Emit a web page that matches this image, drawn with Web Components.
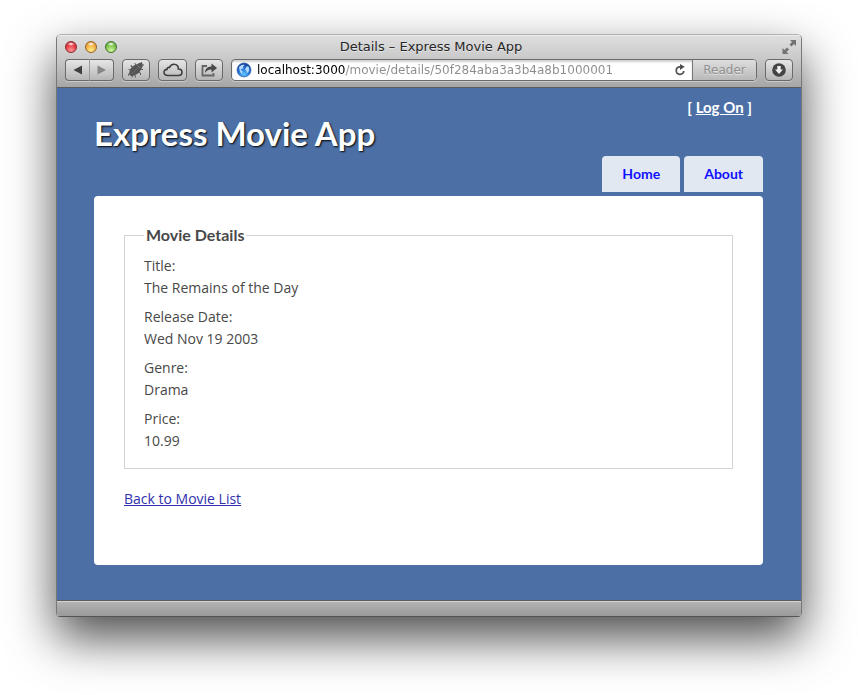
<!DOCTYPE html>
<html lang="en">
<head>
<meta charset="utf-8">
<title>Details – Express Movie App</title>
<style>
  * { box-sizing: border-box; }
  body {
    margin: 0;
    min-height: 100vh;
    padding: 34px 56px 78px;
    display: flex;
    flex-direction: column;
    background: #fff;
    overflow: hidden;
    font-family: "Open Sans", sans-serif;
    font-size: 14px;
    color: #484848;
  }
</style>
</head>
<body>
<browser-window>
  <browser-toolbar slot="chrome" heading="Details – Express Movie App" address="localhost:3000/movie/details/50f284aba3a3b4a8b1000001"></browser-toolbar>
  <movie-page>
    <movie-details legend="Movie Details">
      <detail-row label="Title:">The Remains of the Day</detail-row>
      <detail-row label="Release Date:">Wed Nov 19 2003</detail-row>
      <detail-row label="Genre:">Drama</detail-row>
      <detail-row label="Price:">10.99</detail-row>
    </movie-details>
  </movie-page>
</browser-window>

<template id="t-window">
  <style>
    :host { display: flex; flex-direction: column; flex: 1; border-radius: 5px 5px 4px 4px; border: 1px solid #777; border-top-color: #b2b2b2; border-bottom-color: #555; box-shadow: 0 21px 48px rgba(0,0,0,.7); overflow: hidden; }
    main { flex: 1; display: flex; flex-direction: column; background: #4c70a6; }
    footer { height: 16px; box-sizing: border-box; border-top: 1px solid #5c5c5c; box-shadow: inset 0 1px #d4d4d4; background: linear-gradient(#b5b5b5, #9a9a9a); }
  </style>
  <slot name="chrome"></slot>
  <main><slot></slot></main>
  <footer></footer>
</template>

<template id="t-toolbar">
  <style>
    :host { display: block; background: linear-gradient(#dfdfdf, #c9c9c9 45%, #a6a6a6); border-bottom: 1px solid #5c5c5c; font-family: "DejaVu Sans", sans-serif; box-shadow: inset 0 1px #ececec; }
    .bar { display: grid; grid-template-columns: 1fr auto 1fr; align-items: center; height: 24px; padding: 0 4px 0 8px; }
    .lights { display: flex; gap: 8px; }
    .lights button { width: 12px; height: 12px; border-radius: 50%; padding: 0; border: 1px solid; }
    .lights .red { background: radial-gradient(ellipse 4px 2px at 50% 20%, #fff, transparent), radial-gradient(circle at 50% 85%, #ff9a9a, #e8353c 60%, #b51a24); border-color: #8c2a2e; }
    .lights .amber { background: radial-gradient(ellipse 4px 2px at 50% 20%, #fff, transparent), radial-gradient(circle at 50% 85%, #fff08a, #f2ab3c 60%, #cf7c1c); border-color: #94622a; }
    .lights .green { background: radial-gradient(ellipse 4px 2px at 50% 20%, #fff, transparent), radial-gradient(circle at 50% 85%, #d3f7a0, #74c044 60%, #458c28); border-color: #44742e; }
    h2 { margin: 0; font-size: 13px; font-weight: 400; line-height: 20px; color: #262626; text-shadow: 0 1px rgba(255,255,255,.5); }
    .full { justify-self: end; width: 16px; height: 16px; padding: 0; border: 0; background: none; }
    .tools { display: flex; gap: 8px; padding: 0 8px 6px; }
    .key { box-sizing: border-box; display: flex; align-items: center; justify-content: center; width: 28px; height: 22px; padding: 0; border: 1px solid #6a6a6a; border-radius: 4px; background: linear-gradient(#e6e6e6, #b6b6b6); box-shadow: 0 1px rgba(255,255,255,.35); }
    .cloud { width: 29px; }
    .nav { display: flex; }
    .nav .key { width: 25px; }
    .nav .key:first-child { border-radius: 4px 0 0 4px; border-right-color: #999; }
    .nav .key:last-child { width: 24px; border-radius: 0 4px 4px 0; border-left: 0; }
    .address { box-sizing: border-box; flex: 1; display: flex; align-items: center; height: 22px; border: 1px solid #6a6a6a; border-radius: 4px; background: #fff; overflow: hidden; box-shadow: 0 1px rgba(255,255,255,.35); }
    .field { display: flex; flex: 1; align-items: center; align-self: stretch; gap: 5px; padding-left: 4px; box-shadow: inset 0 2px 2px rgba(0,0,0,.18); }
    input { flex: 1; min-width: 0; height: 20px; padding: 0; border: 0; outline: 0; font: 12px "DejaVu Sans", sans-serif; color: #000; background: linear-gradient(90deg, #000 88px, #8c8c8c 88px) text; -webkit-text-fill-color: transparent; }
    .reload { width: 24px; height: 20px; padding: 0; border: 0; background: none; }
    .reader { align-self: stretch; width: 64px; padding: 0; border: 0; border-left: 1px solid #777; background: linear-gradient(#dedede, #b9b9b9); font: 12px "DejaVu Sans", sans-serif; color: #909090; text-shadow: 0 1px rgba(255,255,255,.5); }
    svg { display: block; margin: auto; }
  </style>
  <div class="bar">
    <div class="lights"><button class="red" aria-label="Close"></button><button class="amber" aria-label="Minimize"></button><button class="green" aria-label="Zoom"></button></div>
    <h2></h2>
    <button class="full" aria-label="Full screen"><svg width="16" height="16" viewBox="0 0 16 16" fill="#727272"><path d="M9 1H15V7L13 5L10.500 7.500L8.500 5.500L11 3ZM7.500 15H1.500V9L3.500 11L6 8.500L8 10.500L5.500 13Z"/></svg></button>
  </div>
  <div class="tools">
    <div class="nav">
      <button class="key" aria-label="Back"><svg width="10" height="10" viewBox="0 0 10 10"><path d="M0.500 5L9 .5V9.500Z" fill="#404040"/></svg></button>
      <button class="key" aria-label="Forward"><svg width="10" height="10" viewBox="0 0 10 10"><path d="M9 5L.5 .5V9.500Z" fill="#858585"/></svg></button>
    </div>
    <button class="key" aria-label="Debug"><svg width="20" height="18" viewBox="0 0 20 18"><g fill="none" stroke="#5a5a5a" stroke-width="1"><path d="M7 6L5 5.500L5.500 4M10 4L8.500 2M5 9L2.500 8.500M5 12L2.500 13V14.500M12 11L14.500 12V14M9 14L9.500 16.500M14 8L17 8.500M6.500 14L6 16.500M15 3L15.500 1M16 4L18 4"/></g><path d="M3.500 14Q2.500 10 5.500 6.500Q8 3.500 11.500 3Q15 .8 16.500 2.500Q17.500 4.500 15.500 7.500Q13.500 12.500 9 14Q5.500 16 3.500 14Z" fill="#555"/><path d="M6 12.500L12 6.500" stroke="#777" stroke-width=".7"/><path d="M11.500 4.500L14 7" stroke="#999" stroke-width=".7"/></svg></button>
    <button class="key cloud" aria-label="iCloud tabs"><svg width="20" height="14" viewBox="0 0 20 14" fill="none" stroke="#3e3e3e" stroke-width="1.600"><path d="M5 12.500C2.500 12.500 1 11.200 1 9.300C1 7.500 2.400 6.300 4 6.400C4 4.700 5.300 4 6.500 4.500C7.300 2.300 9 1.200 11 1.200C13.800 1.200 15.500 3.300 15.400 6C17.800 6 19 7.400 19 9.300C19 11.200 17.600 12.500 15.500 12.500Z"/></svg></button>
    <button class="key" aria-label="Share"><svg width="18" height="16" viewBox="0 0 18 16"><path d="M7 4H2.500V13.500H13.500V11" fill="none" stroke="#666" stroke-width="1.800"/><path d="M5 11C5 6.500 8 4.500 11.500 4.500V1.500L17 6L11.500 10.500V7.500C8.500 7.300 6.500 8.500 5 11Z" fill="#484848"/></svg></button>
    <div class="address">
      <div class="field">
        <svg width="16" height="16" viewBox="0 0 16 16" style="margin:0"><defs><radialGradient id="g" cx=".5" cy=".8" r=".8"><stop offset="0" stop-color="#62c4ff"/><stop offset=".5" stop-color="#2575d8"/><stop offset="1" stop-color="#123a94"/></radialGradient></defs><circle cx="8" cy="8" r="7" fill="url(#g)" stroke="#24509a" stroke-width=".6"/><path d="M3 5Q5 2.500 7.500 2.500L8.500 3.500L7 4.500L7.500 6L6 7L4.500 7.500L6.500 9.500L6 12L4.500 10.500L3.500 8ZM10.500 4.500L12.500 4.500L13.300 7L12.500 10L11 11L10.500 9L9 7.500Z" fill="#c4e6ff" opacity=".9"/></svg>
        <input type="text" aria-label="Address" spellcheck="false">
        <button class="reload" aria-label="Reload"><svg width="12" height="12" viewBox="0 0 12 12"><path d="M7 2.800H5.500A3.800 3.800 0 1 0 9.800 7" fill="none" stroke="#505050" stroke-width="1.700"/><path d="M6 0L10.800 2.800L6 6Z" fill="#505050"/></svg></button>
      </div>
      <button class="reader">Reader</button>
    </div>
    <button class="key" aria-label="Downloads"><svg width="14" height="14" viewBox="0 0 14 14"><circle cx="7" cy="7" r="6.800" fill="#444"/><path d="M5.300 3H8.700V6.500H11L7 11L3 6.500H5.300Z" fill="#eee"/></svg></button>
  </div>
</template>

<template id="t-page">
  <style>
    :host { display: flex; flex-direction: column; flex: 1; padding: 0 38px 35px 37px; }
    header { display: flex; justify-content: space-between; padding: 8px 0 4px; font-family: Lato, sans-serif; }
    h1 { margin: 0; padding-top: 17px; font-size: 33px; line-height: 40px; font-weight: 700; color: #fff; text-shadow: 1px 1px 2px #000; }
    .side { display: flex; flex-direction: column; align-items: flex-end; gap: 38px; }
    .login { padding-right: 11px; font-size: 15px; line-height: 22px; font-weight: 700; color: #fff; }
    .login a { color: inherit; }
    nav { display: flex; gap: 4px; }
    nav a { padding: 0 20px; border-radius: 4px 4px 0 0; background: #e2e8f2; font-size: 14px; line-height: 36px; font-weight: 700; color: #1010ff; text-decoration: none; }
    section { flex: 1; padding: 29px 30px 0; border-radius: 4px; background: #fff; }
    .back { display: inline-block; margin-top: 19px; line-height: 22px; color: #3030ad; }
  </style>
  <header>
    <h1>Express Movie App</h1>
    <div class="side">
      <div class="login">[ <a href="#logon">Log On</a> ]</div>
      <nav><a href="#home">Home</a><a href="#about">About</a></nav>
    </div>
  </header>
  <section>
    <slot></slot>
    <a class="back" href="#movies">Back to Movie List</a>
  </section>
</template>

<template id="t-details">
  <style>
    :host { display: block; }
    fieldset { margin: 0; padding: 10px 19px 16px; border: 1px solid #d3d3d3; }
    legend { padding: 0 2px; font: 700 16px/20px Lato, sans-serif; }
    .rows { display: flex; flex-direction: column; gap: 7px; }
  </style>
  <fieldset><legend></legend><div class="rows"><slot></slot></div></fieldset>
</template>

<template id="t-row">
  <style>
    :host { display: block; line-height: 22px; }
  </style>
  <div class="label"></div>
  <div><slot></slot></div>
</template>

<script>
  class Base extends HTMLElement {
    constructor() {
      super();
      this.attachShadow({ mode: 'open' }).append(document.getElementById(this.constructor.tpl).content.cloneNode(true));
    }
    set(selector, attribute, property = 'textContent') {
      this.shadowRoot.querySelector(selector)[property] = this.getAttribute(attribute);
    }
  }
  customElements.define('browser-window', class extends Base { static tpl = 't-window'; });
  customElements.define('browser-toolbar', class extends Base {
    static tpl = 't-toolbar';
    connectedCallback() { this.set('h2', 'heading'); this.set('input', 'address', 'value'); }
  });
  customElements.define('movie-page', class extends Base { static tpl = 't-page'; });
  customElements.define('movie-details', class extends Base {
    static tpl = 't-details';
    connectedCallback() { this.set('legend', 'legend'); }
  });
  customElements.define('detail-row', class extends Base {
    static tpl = 't-row';
    connectedCallback() { this.set('.label', 'label'); }
  });
</script>
</body>
</html>
